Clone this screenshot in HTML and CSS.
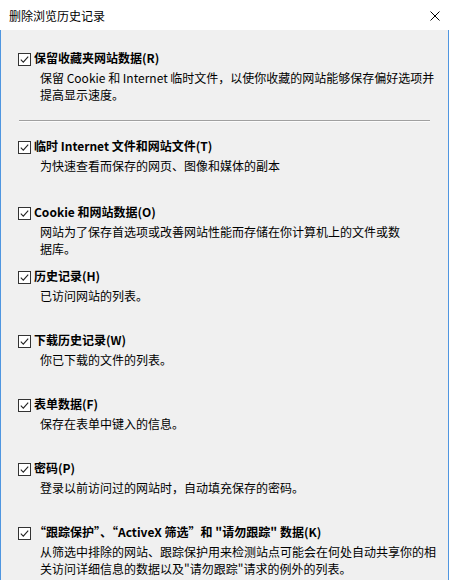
FILE: index.html
```html
<!DOCTYPE html>
<html lang="zh-CN">
<head>
<meta charset="utf-8">
<title>删除浏览历史记录</title>
<link rel="stylesheet" href="styles.css">
</head>
<body>
<div class="window">
  <header class="titlebar">
    <span class="title">删除浏览历史记录</span>
    <svg class="close" width="10" height="10" viewBox="0 0 10 10" aria-label="关闭"><path d="M0.5 0.5 L9.5 9.5 M9.5 0.5 L0.5 9.5" stroke="#000" stroke-width="1" fill="none"/></svg>
  </header>
  <main class="content">
    <section class="item first">
      <div class="label"><span class="cb"><svg viewBox="0 0 11 11"><polyline points="1.8,5.6 4.3,8.1 9.2,2.6" fill="none" stroke="#222" stroke-width="1.1"/></svg></span><span>保留收藏夹网站数据(R)</span></div>
      <p class="desc">保留 Cookie 和 Internet 临时文件，以使你收藏的网站能够保存偏好选项并<br>提高显示速度。</p>
    </section>
    <hr class="sep">
    <section class="item tall">
      <div class="label"><span class="cb"><svg viewBox="0 0 11 11"><polyline points="1.8,5.6 4.3,8.1 9.2,2.6" fill="none" stroke="#222" stroke-width="1.1"/></svg></span><span>临时 Internet 文件和网站文件(T)</span></div>
      <p class="desc">为快速查看而保存的网页、图像和媒体的副本</p>
    </section>
    <section class="item">
      <div class="label"><span class="cb"><svg viewBox="0 0 11 11"><polyline points="1.8,5.6 4.3,8.1 9.2,2.6" fill="none" stroke="#222" stroke-width="1.1"/></svg></span><span>Cookie 和网站数据(O)</span></div>
      <p class="desc">网站为了保存首选项或改善网站性能而存储在你计算机上的文件或数<br>据库。</p>
    </section>
    <section class="item">
      <div class="label"><span class="cb"><svg viewBox="0 0 11 11"><polyline points="1.8,5.6 4.3,8.1 9.2,2.6" fill="none" stroke="#222" stroke-width="1.1"/></svg></span><span>历史记录(H)</span></div>
      <p class="desc">已访问网站的列表。</p>
    </section>
    <section class="item">
      <div class="label"><span class="cb"><svg viewBox="0 0 11 11"><polyline points="1.8,5.6 4.3,8.1 9.2,2.6" fill="none" stroke="#222" stroke-width="1.1"/></svg></span><span>下载历史记录(W)</span></div>
      <p class="desc">你已下载的文件的列表。</p>
    </section>
    <section class="item">
      <div class="label"><span class="cb"><svg viewBox="0 0 11 11"><polyline points="1.8,5.6 4.3,8.1 9.2,2.6" fill="none" stroke="#222" stroke-width="1.1"/></svg></span><span>表单数据(F)</span></div>
      <p class="desc">保存在表单中键入的信息。</p>
    </section>
    <section class="item">
      <div class="label"><span class="cb"><svg viewBox="0 0 11 11"><polyline points="1.8,5.6 4.3,8.1 9.2,2.6" fill="none" stroke="#222" stroke-width="1.1"/></svg></span><span>密码(P)</span></div>
      <p class="desc">登录以前访问过的网站时，自动填充保存的密码。</p>
    </section>
    <section class="item">
      <div class="label"><span class="cb"><svg viewBox="0 0 11 11"><polyline points="1.8,5.6 4.3,8.1 9.2,2.6" fill="none" stroke="#222" stroke-width="1.1"/></svg></span><span>“跟踪保护”、“ActiveX 筛选”和 "请勿跟踪" 数据(K)</span></div>
      <p class="desc">从筛选中排除的网站、跟踪保护用来检测站点可能会在何处自动共享你的相<br>关访问详细信息的数据以及"请勿跟踪"请求的例外的列表。</p>
    </section>
  </main>
</div>
</body>
</html>
```

FILE: styles.css
```css
html, body {
  margin: 0;
  padding: 0;
}

body {
  width: 449px;
  height: 580px;
  overflow: hidden;
  background: #f0f0f0;
  font-family: "Noto Sans CJK SC", "Noto Sans", sans-serif;
  font-size: 12px;
  color: #000;
}

.window {
  height: 580px;
  display: flex;
  flex-direction: column;
}

.titlebar {
  flex: none;
  height: 30px;
  box-sizing: border-box;
  background: #fff;
  display: flex;
  align-items: center;
  justify-content: space-between;
  padding: 1px 9px 0 9px;
}

.title {
  line-height: 18px;
}

.close {
  display: block;
}

.content {
  flex: 1;
  border-left: 1px solid #4f96e0;
  border-right: 1px solid #4f96e0;
  padding: 19px 0 0 17px;
}

.item {
  height: 64px;
}

.item.first {
  height: auto;
}

.item.tall {
  height: 66px;
}

.label {
  display: flex;
  align-items: flex-start;
  gap: 3px;
  font-weight: bold;
  line-height: 18px;
  white-space: nowrap;
}

.cb {
  flex: none;
  width: 13px;
  height: 13px;
  box-sizing: border-box;
  margin-top: 4px;
  border: 1px solid #333;
  background: #fff;
  display: flex;
}

.cb svg {
  width: 11px;
  height: 11px;
  display: block;
}

.desc {
  margin: 2px 0 0 22px;
  line-height: 17px;
  white-space: nowrap;
}

.sep {
  border: 0;
  border-top: 1px solid #a0a0a0;
  border-bottom: 1px solid #fcfcfc;
  height: 0;
  margin: 17px 18px 15px 1px;
}
```
